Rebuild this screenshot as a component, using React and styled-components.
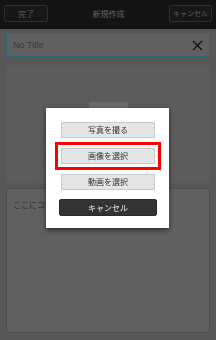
import React from 'react';
import styled, {createGlobalStyle} from 'styled-components';

const GlobalStyle = createGlobalStyle`
    html, body {
        margin:0;
        padding:0;
        background:#575757;
        font-family:"Noto Sans CJK JP", "Noto Sans", sans-serif;
    }
    #root{
        width:216px;
        height:340px;
        overflow:hidden;
    }
`;

const Page = styled.div`
    display:flex;
    flex-direction:column;
    width:216px;
    height:340px;
    background:#575757;
`;

const Header = styled.div`
    display:flex;
    align-items:center;
    justify-content:space-between;
    height:29px;
    padding:0 4px 1px 4px;
    box-sizing:border-box;
    background:#141414;
    border-bottom:1px solid #0c0c0c;
`;

const HeaderButton = styled.button`
    width:${props => props.$w}px;
    height:17px;
    padding:0;
    background:#171717;
    border:1px solid #2e2e2e;
    border-radius:2px;
    color:#5e5e5e;
    font-family:inherit;
    font-size:${props => props.$small ? '7px' : '8px'};
    line-height:15px;
    white-space:nowrap;
`;

const HeaderTitle = styled.div`
    color:#646464;
    font-size:8px;
`;

const Main = styled.div`
    display:flex;
    flex-direction:column;
    padding:4px 6px 0 6px;
    flex:1;
`;

const TitleField = styled.div`
    display:flex;
    align-items:center;
    justify-content:space-between;
    height:24px;
    box-sizing:border-box;
    padding:0 6px 0 6px;
    background:#606060;
    border:1px solid #2b6a7b;
    color:#383838;
    font-family:"Liberation Sans", sans-serif;
    font-size:9px;
`;

const ImageArea = styled.div`
    display:flex;
    justify-content:center;
    margin-top:7px;
    height:120px;
    background:#5c5c5c;
    border:1px solid #585858;
    box-sizing:border-box;
`;

const ImageButton = styled.div`
    margin-top:37px;
    width:39px;
    height:16px;
    background:#6b6b6b;
`;

const Comment = styled.div`
    margin-top:4px;
    height:145px;
    box-sizing:border-box;
    padding:10px 6px;
    background:#606060;
    border:1px solid #4e4e4e;
    color:#363636;
    font-size:8px;
`;

const Overlay = styled.div`
    position:fixed;
    inset:0;
    display:flex;
    align-items:center;
    justify-content:center;
    padding:0 0 4px 0;
`;

const Modal = styled.div`
    display:flex;
    flex-direction:column;
    width:123px;
    height:120px;
    box-sizing:border-box;
    padding:14px 14px 0 15px;
    background:#ffffff;
    box-shadow:0 2px 5px rgba(0,0,0,0.55);
    margin-left:-1px;
`;

const SheetButton = styled.button`
    display:block;
    width:${props => props.$dark ? '98px' : '94px'};
    height:${props => props.$dark ? '17px' : '16px'};
    margin:${props => props.$dark ? '9px 0 0 -2px' : '0'};
    margin-bottom:${props => props.$gap || 0}px;
    padding:0;
    background:${props => props.$dark ? '#333333' : '#e5e5e5'};
    border:1px solid ${props => props.$dark ? '#2a2a2a' : '#c9c9c9'};
    border-radius:${props => props.$dark ? '2px' : '0'};
    color:${props => props.$dark ? '#eeeeee' : '#333333'};
    font-family:inherit;
    font-size:8px;
    line-height:14px;
    outline:${props => props.$selected ? '3px solid #ff0000' : 'none'};
    outline-offset:3px;
`;

const App = () => {
    return (
        <>
            <GlobalStyle/>
            <Page>
                <Header>
                    <HeaderButton $w={44}>完了</HeaderButton>
                    <HeaderTitle>新規作成</HeaderTitle>
                    <HeaderButton $w={43} $small>キャンセル</HeaderButton>
                </Header>
                <Main>
                    <TitleField>
                        <span>No Title</span>
                        <svg width="11" height="11" viewBox="0 0 11 11">
                            <path d="M1 1 L10 10 M10 1 L1 10" stroke="#111" strokeWidth="1.3" fill="none"/>
                        </svg>
                    </TitleField>
                    <ImageArea>
                        <ImageButton/>
                    </ImageArea>
                    <Comment>ここにコメントを入力</Comment>
                </Main>
            </Page>
            <Overlay>
                <Modal>
                    <SheetButton $gap={10}>写真を撮る</SheetButton>
                    <SheetButton $gap={10} $selected>画像を選択</SheetButton>
                    <SheetButton>動画を選択</SheetButton>
                    <SheetButton $dark>キャンセル</SheetButton>
                </Modal>
            </Overlay>
        </>
    );
}

export default App
